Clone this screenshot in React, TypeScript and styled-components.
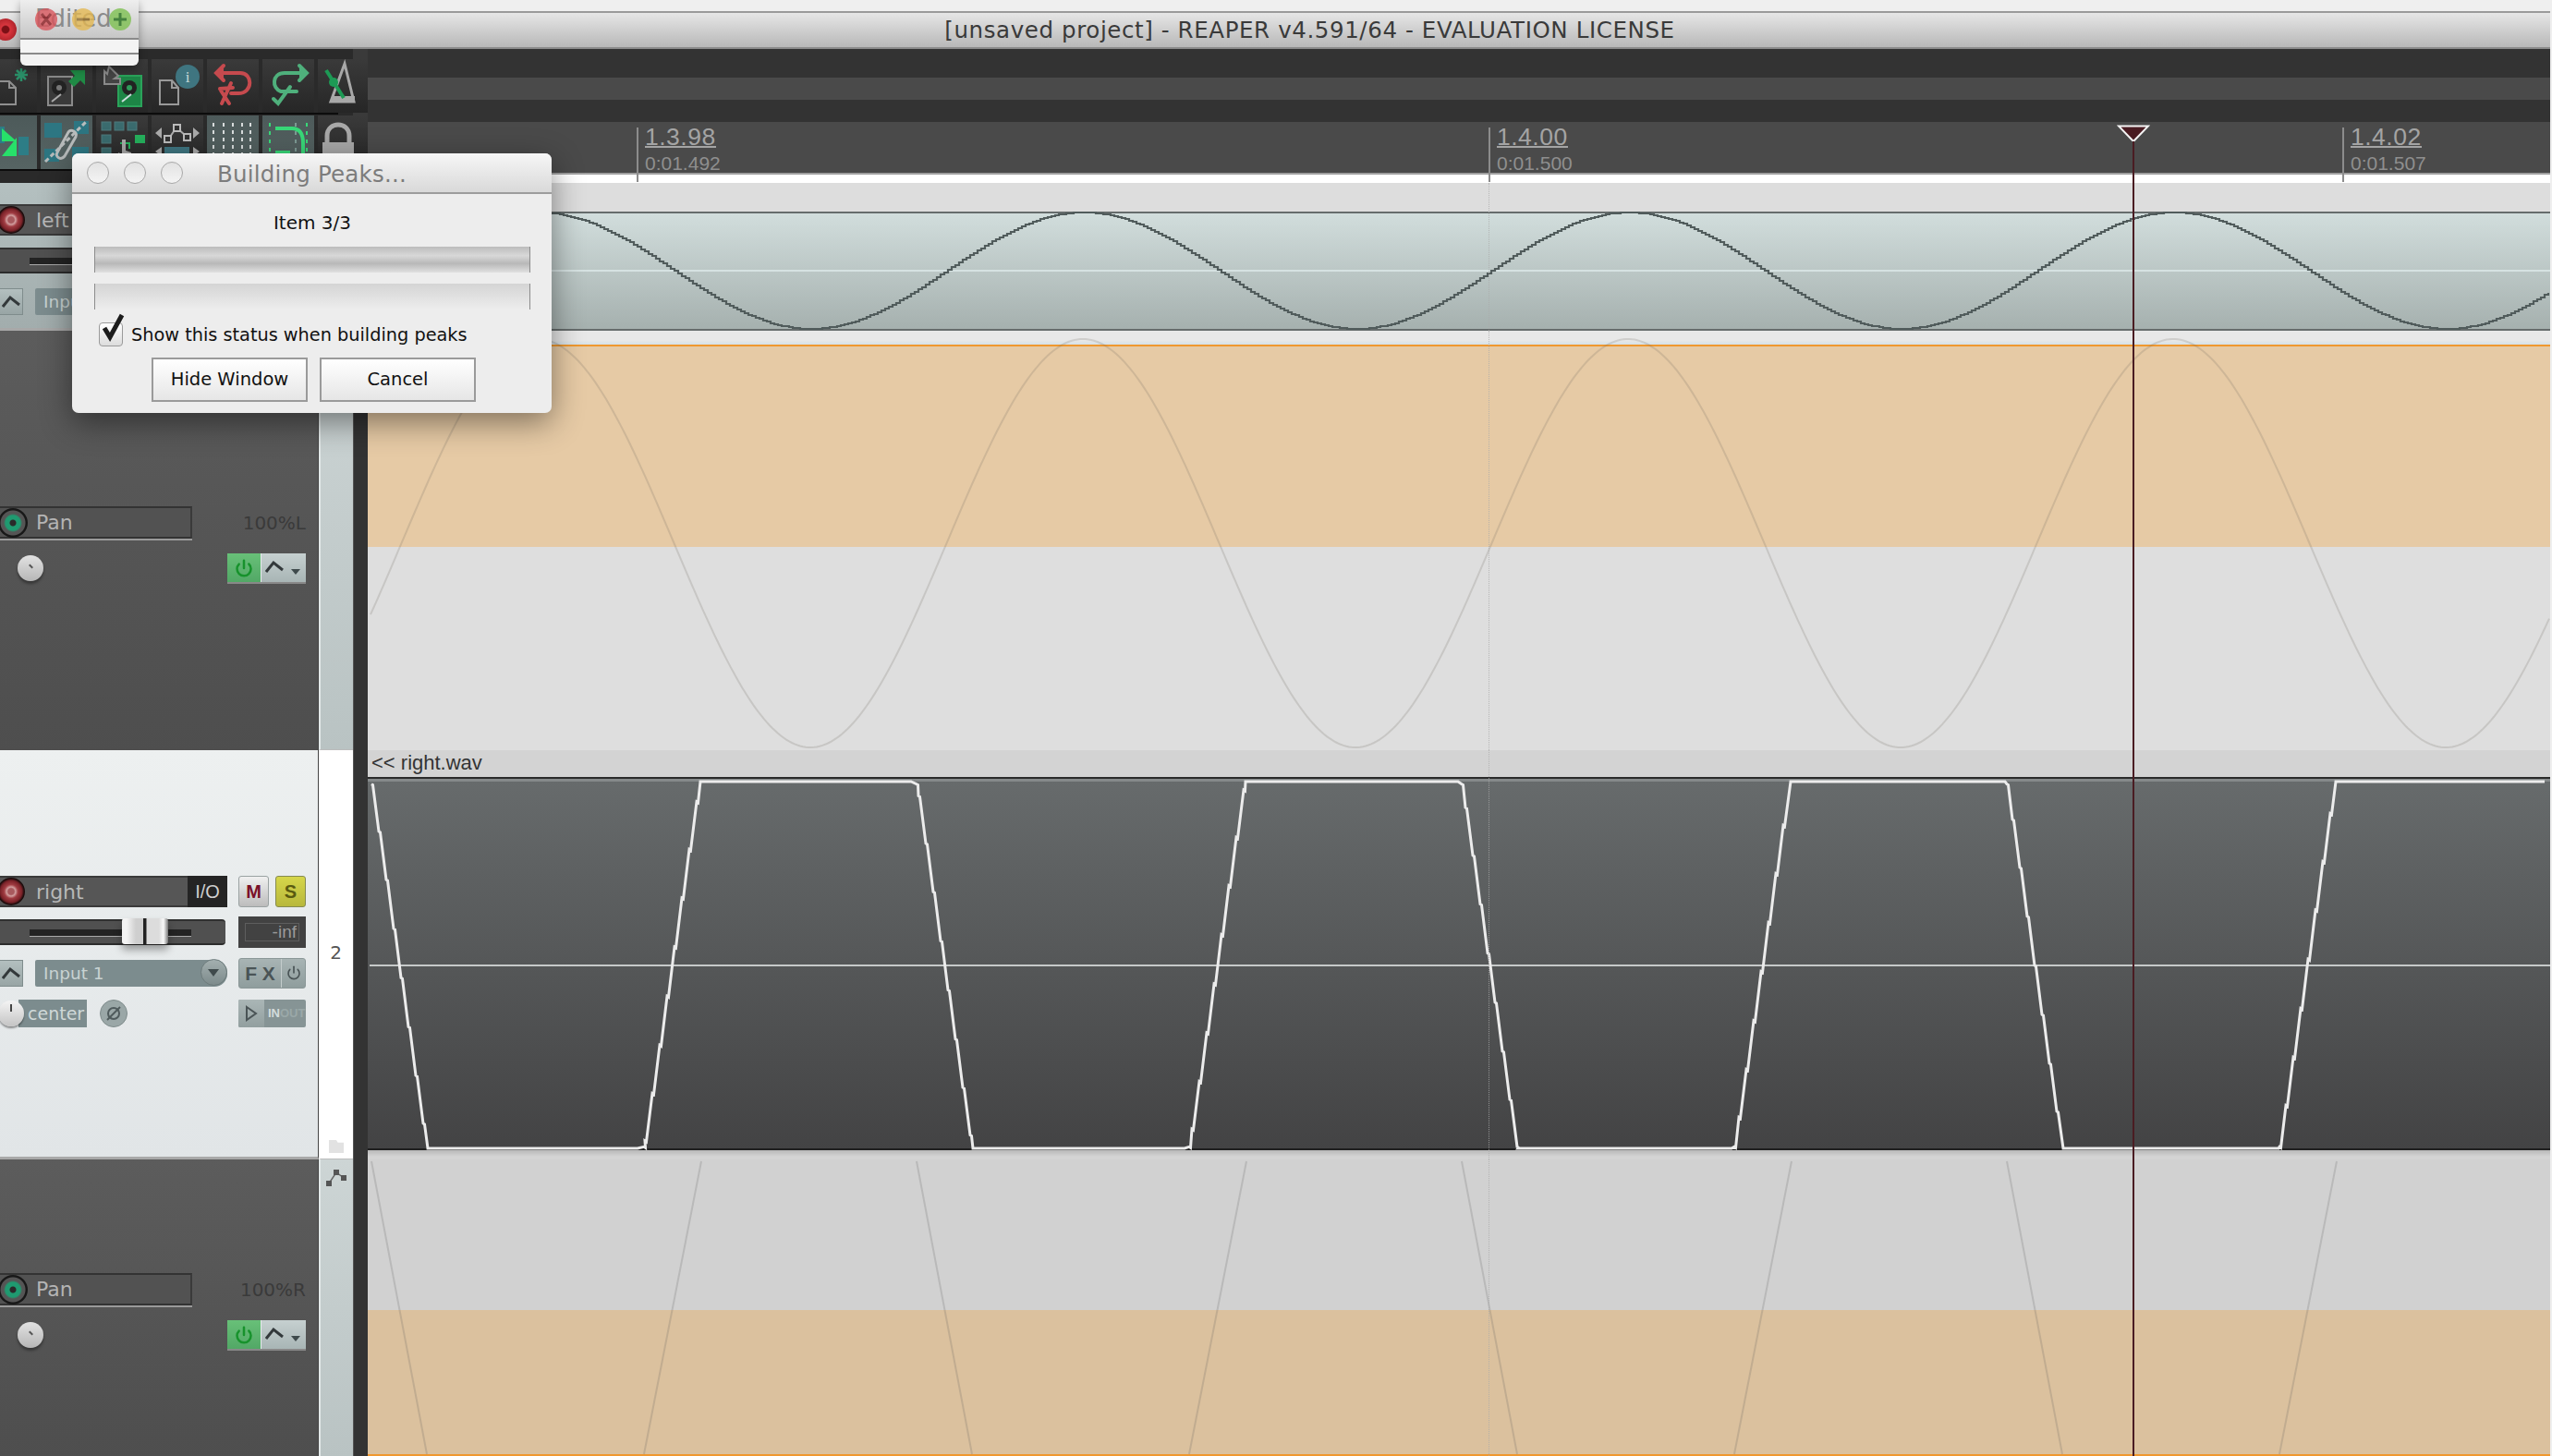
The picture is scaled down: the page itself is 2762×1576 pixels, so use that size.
import React from 'react';
import styled, { createGlobalStyle } from 'styled-components';
import { Power } from 'lucide-react';

const PERIOD = 590;

// smooth sine, page coordinates
const sinePath = (center: number, amp: number, peakAt: number, from = 398, to = 2760) => {
  let d = '';
  for (let x = from; x <= to; x += 3) {
    const y = center - amp * Math.cos((2 * Math.PI * (x - peakAt)) / PERIOD);
    d += `${d ? 'L' : 'M'}${x} ${y.toFixed(1)}`;
  }
  return d;
};

// same sine but stair stepped, the way the peaks are drawn
const stairPath = (center: number, amp: number, peakAt: number) => {
  let d = '';
  for (let x = 398; x <= 2760; x += 4) {
    const y = Math.round(center - amp * Math.cos((2 * Math.PI * (x - peakAt)) / PERIOD));
    d += d ? `H${x}V${y}` : `M${x} ${y}`;
  }
  return d;
};

// clipped sine of the right channel, with the little jogs on the slopes
const clippedPath = () => {
  const TOP = 846;
  const BOTTOM = 1243;
  let d = '';
  let wasClipped = false;
  for (let x = 402; x <= 2760; x += 1) {
    const raw = 1045 - 625 * Math.sin((2 * Math.PI * (x - 727)) / PERIOD);
    const y = Math.max(TOP, Math.min(BOTTOM, raw));
    const clipped = y === TOP || y === BOTTOM;
    // keep the corners sharp, step the slopes every 8px
    if (clipped !== wasClipped || (x - 402) % 8 === 0) {
      d += `${d ? 'L' : 'M'}${x} ${y.toFixed(1)}`;
      if (!clipped) d += `L${x + 1.5} ${(y + 1).toFixed(1)}`;
    }
    wasClipped = clipped;
  }
  return d;
};

const ghostEdges = () => {
  const parts: string[] = [];
  for (let k = 0; k < 4; k++) {
    parts.push(`M${402 + k * PERIOD} 1255L${462 + k * PERIOD} 1572`);
    parts.push(`M${759 + k * PERIOD} 1255L${697 + k * PERIOD} 1572`);
  }
  return parts.join('');
};

const toolbarIcons: React.ReactNode[][] = [
  [
    <g key="new" fill="none" stroke="#8f8f8f" strokeWidth="2" transform="translate(16 0)">
      <path d="M-4 24H10L17 31V49H-4Z" />
      <path d="M10 24V31H17" />
      <path d="M23 10V24M16 17H30M18 12L28 22M28 12L18 22" stroke="#2a8f68" strokeWidth="2.5" />
    </g>,
    <g key="save">
      <rect x="8" y="19" width="26" height="31" fill="#3a3a3a" stroke="#8a8a8a" strokeWidth="2" />
      <circle cx="20" cy="31" r="8" fill="#222" />
      <circle cx="20" cy="31" r="3" fill="#777" />
      <path d="M12 46L22 38" stroke="#aaa" strokeWidth="2" />
      <path d="M30 24L37 18L32 12H48V28L43 23L36 30Z" fill="#1f8a45" />
    </g>,
    <g key="open">
      <rect x="24" y="18" width="25" height="33" fill="#1d8546" stroke="#2aa35a" strokeWidth="2" />
      <circle cx="36" cy="31" r="8" fill="#222" />
      <circle cx="36" cy="31" r="3" fill="#2f9a5a" />
      <path d="M28 46L38 38" stroke="#cdd" strokeWidth="2" />
      <path d="M14 8L24 18L20 21L26 21V27H9V13L12 16Z" fill="#444" stroke="#8a8a8a" strokeWidth="2" />
    </g>,
    <g key="info">
      <circle cx="39" cy="19" r="13" fill="#3f7580" />
      <text x="39" y="25" textAnchor="middle" fontSize="17" fontFamily="Liberation Serif, serif" fill="#c8d8d8">i</text>
      <path d="M9 23H22L29 31V49H9Z M22 23V31H29" fill="none" stroke="#999" strokeWidth="2" />
    </g>,
    <g key="undo" fill="none" stroke="#c64a4e" strokeWidth="4" strokeLinecap="round">
      <path d="M17 15H36C50 15 50 37 34 37H26" />
      <path d="M18 7L10 15L18 23" fill="#c64a4e" />
      <path d="M14 32L28 31M26 26L16 48M15 34L24 48" />
    </g>,
    <g key="redo" fill="none" stroke="#4fb07c" strokeWidth="4" strokeLinecap="round">
      <path d="M46 15H24C10 15 10 32 20 35H37" />
      <path d="M40 7L48 15L40 23" fill="#4fb07c" />
      <path d="M12 43L17 48L30 30" />
    </g>,
    <g key="metronome">
      <path d="M29 5L39 46H14Z" fill="none" stroke="#a8a8a8" strokeWidth="3" />
      <path d="M15 46H40V40H17Z" fill="#a8a8a8" />
      <path d="M9 12L28 42" stroke="#1d9a55" strokeWidth="4" />
      <circle cx="17" cy="25" r="5" fill="#1d9a55" />
    </g>,
  ],
  [
    <g key="snap">
      <rect x="16" y="12" width="5" height="18" fill="#2d7d86" />
      <rect x="36" y="23" width="11" height="20" fill="#2d7d86" />
      <path d="M18 14L34 28H18ZM34 24V44H18Z" fill="#27e06a" />
    </g>,
    <g key="link">
      <rect x="4" y="8" width="19" height="16" fill="#2d7682" />
      <rect x="36" y="6" width="16" height="14" fill="#2d7682" />
      <rect x="4" y="36" width="16" height="14" fill="#2d7682" />
      <rect x="34" y="34" width="18" height="16" fill="#2d7682" />
      <g fill="none" stroke="#b8bcbc" strokeWidth="3">
        <path d="M5 50L50 6" strokeDasharray="5 3" />
        <path d="M18 40L30 18C33 14 40 18 38 23L26 44C22 49 15 45 18 40Z" />
      </g>
    </g>,
    <g key="grid">
      <g fill="#3a6b6e" stroke="#4f7a7c">
        <rect x="6" y="7" width="10" height="9" />
        <rect x="20" y="7" width="10" height="9" />
        <rect x="34" y="7" width="10" height="9" />
        <rect x="6" y="21" width="10" height="9" />
        <rect x="6" y="35" width="10" height="9" />
      </g>
      <rect x="42" y="21" width="11" height="9" fill="#25b05c" />
      <path d="M26 30H36V36" fill="none" stroke="#25b05c" strokeWidth="2" />
      <path d="M28 26H32V38L38 40V50H26L24 40L28 42Z" fill="#a8a8a8" />
    </g>,
    <g key="nodes">
      <path d="M18 26L27 13L37 22" fill="none" stroke="#aaa" strokeWidth="2" />
      <rect x="14" y="22" width="7" height="7" fill="#333" stroke="#bbb" strokeWidth="2" />
      <rect x="24" y="10" width="7" height="7" fill="#333" stroke="#bbb" strokeWidth="2" />
      <rect x="35" y="20" width="7" height="7" fill="#333" stroke="#bbb" strokeWidth="2" />
      <path d="M11 13V25L4 19ZM45 13V25L52 19Z" fill="#aaa" />
      <rect x="14" y="34" width="27" height="8" fill="#3f7580" />
      <path d="M11 34V44L4 39ZM45 34V44L52 39Z" fill="#aaa" />
    </g>,
    <g key="dots" stroke="#d8dcdc" strokeWidth="2" strokeDasharray="4 4">
      <path d="M7 8V44M18 8V44M28 8V44M38 8V44M47 8V44" />
    </g>,
    <g key="loop">
      <path d="M8 8V50M48 8V50" stroke="#38d878" strokeWidth="2" strokeDasharray="4 5" fill="none" />
      <path d="M36 8V50" stroke="#7d9a94" strokeWidth="2" strokeDasharray="4 5" fill="none" />
      <path d="M14 14H32C42 14 44 22 44 30V50M14 40H30" fill="none" stroke="#38d878" strokeWidth="4" />
    </g>,
    <g key="lock">
      <path d="M10 32V22C10 6 34 6 34 22V32" fill="none" stroke="#a8a8a8" strokeWidth="5" />
      <rect x="5" y="29" width="34" height="22" fill="#a8a8a8" />
    </g>,
  ],
];

const App: React.FC = () => (
  <>
    <GlobalStyle />
    <Screen>
      <MenuStrip />
      <TitleBar>
        <MainClose />
        <TitleText>[unsaved project] - REAPER v4.591/64 - EVALUATION LICENSE</TitleText>
      </TitleBar>

      <TopArea>
        <ToolbarWrap>
          {toolbarIcons.map((row, r) => (
            <ToolRow key={r}>
              {row.map((icon, c) => (
                <ToolButton key={c} $on={r === 1 && (c === 0 || c === 1 || c === 4 || c === 5)}>
                  <svg width="56" height="58" viewBox="0 0 56 58">{icon}</svg>
                </ToolButton>
              ))}
            </ToolRow>
          ))}
        </ToolbarWrap>
        <Bands>
          <Band $h={31} $c="#333333" />
          <Band $h={24} $c="#4a4a4a" />
          <Band $h={24} $c="#333333" />
          <Ruler>
            <RulerTick $left={291}>
              <Beat>1.3.98</Beat>
              <Stamp>0:01.492</Stamp>
            </RulerTick>
            <RulerTick $left={1213}>
              <Beat>1.4.00</Beat>
              <Stamp>0:01.500</Stamp>
            </RulerTick>
            <RulerTick $left={2137}>
              <Beat>1.4.02</Beat>
              <Stamp>0:01.507</Stamp>
            </RulerTick>
          </Ruler>
          <RulerFoot />
        </Bands>
      </TopArea>

      <Tracks>
        <TrackRowGrid $h={160}>
          <TrackPanel name="left" number="1" top={23} tone="teal" />
          <Divider />
          <Lane>
            <LaneHeader />
            <ItemTeal>
              <CenterLine $c="#d6e2e2" $top={63} />
              <WaveSvg viewBox="398 229 2362 129" preserveAspectRatio="none">
                <path d={stairPath(293, 63, 1172)} fill="none" stroke="#515c5c" strokeWidth="2.2" />
              </WaveSvg>
            </ItemTeal>
            <GridLine />
          </Lane>
        </TrackRowGrid>

        <TrackRowGrid $h={454}>
          <EnvPanel value="100%L" top={190} />
          <Divider />
          <Lane>
            <EnvGap />
            <OrangeLine $h={2} />
            <Fill $h={217} $c="#e6caa5" />
            <Fill $h={220} $c="#dedede" />
            <WaveSvg viewBox="398 358 2362 454" preserveAspectRatio="none">
              <path d={sinePath(588, 221, 1172, 401)} fill="none" stroke="rgba(110,105,95,.2)" strokeWidth="2" />
            </WaveSvg>
            <GridLine />
          </Lane>
        </TrackRowGrid>

        <TrackRowGrid $h={443}>
          <TrackPanel name="right" number="2" top={136} tone="light" full />
          <Divider />
          <Lane>
            <ItemLabel>&lt;&lt; right.wav</ItemLabel>
            <ItemDark>
              <CenterLine $c="#c6c9c9" $top={201} />
              <WaveSvg viewBox="398 843 2362 402" preserveAspectRatio="none">
                <path d={clippedPath()} fill="none" stroke="#ececec" strokeWidth="3" />
              </WaveSvg>
            </ItemDark>
            <ItemFoot />
            <GridLine />
          </Lane>
        </TrackRowGrid>

        <TrackRowGrid $h={323}>
          <EnvPanel value="100%R" top={123} />
          <Divider />
          <Lane>
            <Fill $h={163} $c="#d1d1d1" />
            <Fill $h={156} $c="#dbc19e" />
            <OrangeLine $h={4} />
            <WaveSvg viewBox="398 1253 2362 323" preserveAspectRatio="none">
              <path d={ghostEdges()} fill="none" stroke="rgba(90,90,90,.2)" strokeWidth="2" />
            </WaveSvg>
            <GridLine />
          </Lane>
        </TrackRowGrid>
      </Tracks>

      <Playhead>
        <svg width="36" height="20" viewBox="0 0 36 20">
          <path d="M2 1.5H34L18 18Z" fill="#4a1c22" stroke="#f4f4f4" strokeWidth="2" />
        </svg>
      </Playhead>

      <Palette>
        <PaletteTitle>
          <PaletteText>Edited</PaletteText>
          <PaletteLights>
            <Light $c="#d9535a">
              <svg width="24" height="24" viewBox="0 0 24 24"><path d="M7 6L17 18M17 6L7 18" stroke="#8c1a1f" strokeWidth="3" /></svg>
            </Light>
            <Light $c="#e4b850">
              <svg width="24" height="24" viewBox="0 0 24 24"><path d="M5 12H19" stroke="#96702a" strokeWidth="3" /></svg>
            </Light>
            <Light $c="#7cc04e">
              <svg width="24" height="24" viewBox="0 0 24 24"><path d="M5 12H19M12 5V19" stroke="#1d6a14" strokeWidth="3" /></svg>
            </Light>
          </PaletteLights>
        </PaletteTitle>
        <PaletteBody />
        <PaletteFoot />
      </Palette>

      <Dialog>
        <DialogTitle>
          <DialogLights>
            <GhostLight />
            <GhostLight />
            <GhostLight />
          </DialogLights>
          <DialogName>Building Peaks...</DialogName>
        </DialogTitle>
        <DialogBody>
          <ItemCount>Item 3/3</ItemCount>
          <ProgressBar />
          <ProgressBarEmpty />
          <CheckLine>
            <CheckBox>
              <svg width="32" height="36" viewBox="0 0 32 36">
                <path d="M6 17L12 27L25 3" fill="none" stroke="#1c1c1c" strokeWidth="5" />
              </svg>
            </CheckBox>
            <CheckLabel>Show this status when building peaks</CheckLabel>
          </CheckLine>
          <ButtonLine>
            <DialogButton>Hide Window</DialogButton>
            <DialogButton>Cancel</DialogButton>
          </ButtonLine>
        </DialogBody>
      </Dialog>
    </Screen>
  </>
);

const EnvGlyph: React.FC = () => (
  <svg width="22" height="16" viewBox="0 0 22 16">
    <path d="M1 14L9 4L19 12" fill="none" stroke="#33393b" strokeWidth="3" />
  </svg>
);

const TrackPanel: React.FC<{ name: string; number: string; top: number; tone: 'teal' | 'light'; full?: boolean }> = ({
  name, number, top, tone, full,
}) => (
  <>
    <PanelBody $tone={tone} $top={top}>
      <PanelLine>
        <NameBox>
          <RecButton />
          <TrackName>{name}</TrackName>
          <IoTag>I/O</IoTag>
        </NameBox>
        <MsPair>
          <MuteButton>M</MuteButton>
          <SoloButton>S</SoloButton>
        </MsPair>
      </PanelLine>
      <PanelLine>
        <FaderBox>
          <FaderSlot />
          <FaderCap />
        </FaderBox>
        <Meter><MeterText>-inf</MeterText></Meter>
      </PanelLine>
      <PanelLine>
        <InputCell>
          <SmallEnv><EnvGlyph /></SmallEnv>
          <InputBox>
            Input 1
            <InputArrow />
          </InputBox>
        </InputCell>
        <FxGroup>
          <FxLabel>F X</FxLabel>
          <FxPower><Power size={16} strokeWidth={2.5} color="#4a5456" /></FxPower>
        </FxGroup>
      </PanelLine>
      {full && (
        <PanelLine>
          <PanCell>
            <PanKnob />
            <PanTag>center</PanTag>
            <PhaseButton>
              <svg width="20" height="20" viewBox="0 0 20 20" fill="none" stroke="#4f5a5c" strokeWidth="2">
                <circle cx="10" cy="10" r="6" />
                <path d="M3 17L17 3" />
              </svg>
            </PhaseButton>
          </PanCell>
          <InOutGroup>
            <InPlay>
              <svg width="14" height="18" viewBox="0 0 14 18"><path d="M2 2L12 9L2 16Z" fill="none" stroke="#4a5456" strokeWidth="2" /></svg>
            </InPlay>
            <InOutText>IN<InOutDim>OUT</InOutDim></InOutText>
          </InOutGroup>
        </PanelLine>
      )}
    </PanelBody>
    <Strip $white>
      <StripNumber>{number}</StripNumber>
      <FolderMark />
    </Strip>
  </>
);

const EnvPanel: React.FC<{ value: string; top: number }> = ({ value, top }) => (
  <>
    <EnvBody $top={top}>
      <EnvLine>
        <PanBox>
          <ArmButton />
          <EnvName>Pan</EnvName>
        </PanBox>
        <EnvValue>{value}</EnvValue>
      </EnvLine>
      <EnvLine>
        <EnvKnob />
        <EnvButtons>
          <GreenPower><Power size={20} strokeWidth={3} color="#17922c" /></GreenPower>
          <EnvMode>
            <EnvGlyph />
            <ModeArrow />
          </EnvMode>
        </EnvButtons>
      </EnvLine>
    </EnvBody>
    <Strip>
      <svg width="24" height="22" viewBox="0 0 24 22">
        <path d="M4 17L12 5L20 11" stroke="#666" strokeWidth="1.5" fill="none" />
        <rect x="1" y="14" width="6" height="6" fill="#555" />
        <rect x="9" y="2" width="6" height="6" fill="#555" />
        <rect x="17" y="8" width="6" height="6" fill="#555" />
      </svg>
    </Strip>
  </>
);

const GlobalStyle = createGlobalStyle`
  html, body { margin: 0; padding: 0; background: #efefef; }
  * { box-sizing: border-box; }
`;

const Screen = styled.div`
  position: relative;
  width: 2762px;
  height: 1576px;
  overflow: hidden;
  background: #efefef;
  font-family: "DejaVu Sans", sans-serif;
`;

const MenuStrip = styled.div`
  height: 12px;
  background: #efefef;
`;

const TitleBar = styled.div`
  position: relative;
  height: 41px;
  padding-left: 75px;
  border-top: 2px solid #9a9a9a;
  border-bottom: 2px solid #8c8c8c;
  background: linear-gradient(#e6e6e6, #b8b8b8);
  display: flex;
  align-items: center;
  justify-content: center;
  width: 2760px;
`;

const MainClose = styled.div`
  position: absolute;
  left: -6px;
  top: 6px;
  width: 24px;
  height: 24px;
  border-radius: 50%;
  background: radial-gradient(circle closest-side, #7c1016 30%, #d8363e 42%, #b5262d 100%);
`;

const TitleText = styled.div`
  font-size: 24.5px;
  letter-spacing: 0.6px;
  color: #3a3a3a;
  white-space: nowrap;
`;

const TopArea = styled.div`
  display: flex;
  width: 2760px;
  height: 145px;
  background: #333;
`;

const ToolbarWrap = styled.div`
  width: 398px;
  height: 145px;
  padding-top: 11px;
  background: linear-gradient(90deg, #2a2a2a 382px, #3a3a3a 382px);
  overflow: hidden;
`;

const ToolRow = styled.div`
  display: flex;
  gap: 4px;
  width: 382px;
  margin-left: -16px;
  height: 58px;
  margin-bottom: 3px;
  box-shadow: 0 2px 0 #0c0c0c;
`;

const ToolButton = styled.div<{ $on: boolean }>`
  flex: 0 0 56px;
  height: 58px;
  background: ${({ $on }) => ($on ? 'linear-gradient(#4d5a5a, #566463)' : 'linear-gradient(#3a3a3a, #262626)')};
  overflow: hidden;
`;

const Bands = styled.div`
  flex: 1;
  display: flex;
  flex-direction: column;
`;

const Band = styled.div<{ $h: number; $c: string }>`
  height: ${({ $h }) => $h}px;
  background: ${({ $c }) => $c};
`;

const Ruler = styled.div`
  position: relative;
  height: 57px;
  background: #4a4a4a;
  border-bottom: 2px solid #a0a0a0;
`;

const RulerFoot = styled.div`
  height: 9px;
  background: #fff;
`;

const RulerTick = styled.div<{ $left: number }>`
  position: absolute;
  left: ${({ $left }) => $left}px;
  top: 6px;
  height: 59px;
  padding-left: 7px;
  border-left: 2px solid #8c8c8c;
  color: #a4a4a4;
  font-family: "Liberation Sans", sans-serif;
`;

const Beat = styled.div`
  width: fit-content;
  font-size: 26.5px;
  line-height: 20px;
  border-bottom: 2px solid #a4a4a4;
  letter-spacing: 0.5px;
`;

const Stamp = styled.div`
  font-size: 21px;
  line-height: 24px;
  margin-top: 5px;
  color: #8f8f8f;
`;

const Tracks = styled.div`
  width: 2760px;
  display: flex;
  flex-direction: column;
`;

const TrackRowGrid = styled.div<{ $h: number }>`
  display: grid;
  grid-template-columns: 345px 37px 16px 1fr;
  height: ${({ $h }) => $h}px;
`;

const Divider = styled.div`
  background: #333;
  border-left: 1px solid #555;
`;

const Lane = styled.div`
  position: relative;
  display: flex;
  flex-direction: column;
  overflow: hidden;
`;

const GridLine = styled.div`
  position: absolute;
  left: 1213px;
  top: 0;
  bottom: 0;
  border-left: 1px dotted rgba(170, 170, 170, 0.75);
`;

const LaneHeader = styled.div`
  height: 31px;
  background: #dddddd;
`;

const WaveSvg = styled.svg`
  position: absolute;
  left: 0;
  top: 0;
  width: 100%;
  height: 100%;
`;

const CenterLine = styled.div<{ $c: string; $top: number }>`
  position: absolute;
  left: 2px;
  right: 0;
  top: ${({ $top }) => $top}px;
  height: 2px;
  background: ${({ $c }) => $c};
`;

const ItemTeal = styled.div`
  position: relative;
  height: 129px;
  background: linear-gradient(#d2dedd, #a5b0ae);
  box-shadow: inset 0 2px 0 #666c6c, inset 0 -2px 0 #666c6c;
`;

const EnvGap = styled.div`
  height: 15px;
  background: linear-gradient(#e8e8e8 70%, #d6e1e6);
`;

const OrangeLine = styled.div<{ $h: number }>`
  height: ${({ $h }) => $h}px;
  background: #f0982f;
`;

const Fill = styled.div<{ $h: number; $c: string }>`
  height: ${({ $h }) => $h}px;
  background: ${({ $c }) => $c};
`;

const ItemLabel = styled.div`
  height: 31px;
  padding: 0 4px;
  background: #d3d3d3;
  border-bottom: 2px solid #2a2a2a;
  color: #333;
  font-family: "Liberation Sans", sans-serif;
  font-size: 22px;
  line-height: 28px;
`;

const ItemDark = styled.div`
  position: relative;
  height: 402px;
  background: linear-gradient(#676b6c, #434344);
  box-shadow: inset 0 3px 0 #85898a, inset 0 -2px 0 #1f1f1f;
`;

const ItemFoot = styled.div`
  flex: 1;
  background: linear-gradient(#b8b8b8, #d4d4d4 70%);
`;

const PanelBody = styled.div<{ $tone: 'teal' | 'light'; $top: number }>`
  padding-top: ${({ $top }) => $top}px;
  background: ${({ $tone }) => ($tone === 'teal' ? 'linear-gradient(#b4c0c0, #a2adad)' : 'linear-gradient(#edf0f0, #e1e5e7)')};
  border-right: 1px solid #444;
  border-bottom: 3px solid #a8a8a8;
  overflow: hidden;
`;

const PanelLine = styled.div`
  display: flex;
  align-items: center;
  justify-content: space-between;
  width: 331px;
  height: 34px;
  margin-bottom: 10px;
`;

const NameBox = styled.div`
  display: flex;
  align-items: center;
  width: 246px;
  height: 34px;
  background: #565656;
  border-top: 2px solid #3a3a3a;
  border-bottom: 2px solid #3a3a3a;
`;

const RecButton = styled.div`
  flex: 0 0 30px;
  height: 30px;
  margin-left: -3px;
  border-radius: 50%;
  background: radial-gradient(circle closest-side, #a85a5e 0 22%, #d2a0a0 32%, #a03c42 50%, #7a2228 78%, #1c0c0c 94%);
`;

const TrackName = styled.div`
  flex: 1;
  padding-left: 12px;
  color: #b8b8b8;
  font-size: 22px;
`;

const IoTag = styled.div`
  flex: 0 0 43px;
  height: 34px;
  margin-top: -2px;
  margin-bottom: -2px;
  background: #242424;
  color: #cfcfcf;
  font-family: "Liberation Sans", sans-serif;
  font-size: 20px;
  line-height: 34px;
  text-align: center;
`;

const MsPair = styled.div`
  display: flex;
  gap: 7px;
`;

const MuteButton = styled.div`
  width: 33px;
  height: 34px;
  border-radius: 3px;
  border: 1px solid #9aa2a2;
  background: linear-gradient(#f0f0f0, #bcbcbc);
  color: #7a1028;
  font-family: "Liberation Sans", sans-serif;
  font-weight: 700;
  font-size: 20px;
  line-height: 32px;
  text-align: center;
`;

const SoloButton = styled(MuteButton)`
  border-color: #858a50;
  background: linear-gradient(#d6d64a, #b8b83c);
  color: #5a5a10;
`;

const FaderBox = styled.div`
  position: relative;
  width: 244px;
  height: 28px;
  border-radius: 0 4px 4px 0;
  background: #505050;
  border-top: 2px solid #303030;
  border-bottom: 2px solid #2c2c2c;
`;

const FaderSlot = styled.div`
  position: absolute;
  left: 32px;
  top: 9px;
  width: 175px;
  height: 7px;
  background: #232323;
  box-shadow: 0 1px 0 #aaa;
`;

const FaderCap = styled.div`
  position: absolute;
  left: 132px;
  top: -3px;
  width: 50px;
  height: 28px;
  border-radius: 3px;
  background: linear-gradient(90deg, #f4f4f4 0 10%, #cfcfcf 30% 45%, #222 47% 52%, #dcdcdc 54% 80%, #f8f8f8 90%, #777);
  box-shadow: 0 6px 8px rgba(0, 0, 0, 0.35);
`;

const Meter = styled.div`
  width: 73px;
  height: 34px;
  padding: 7px;
  background: #424242;
`;

const MeterText = styled.div`
  height: 20px;
  padding-right: 2px;
  border: 1px solid #5e5e5e;
  color: #9a9a9a;
  font-family: "Liberation Sans", sans-serif;
  font-size: 19px;
  line-height: 18px;
  text-align: right;
`;

const InputCell = styled.div`
  display: flex;
  align-items: center;
  gap: 13px;
  width: 246px;
`;

const SmallEnv = styled.div`
  flex: 0 0 25px;
  height: 29px;
  display: flex;
  align-items: center;
  justify-content: flex-end;
  background: linear-gradient(#b3bfbf, #98a5a5);
  border: 1px solid #7f8c8c;
  border-left: 0;
  overflow: hidden;
`;

const InputBox = styled.div`
  position: relative;
  flex: 1;
  height: 29px;
  padding-left: 9px;
  border-radius: 2px 14px 14px 2px;
  background: #7c8c8e;
  color: #c8d2d2;
  font-size: 18.5px;
  line-height: 29px;
`;

const InputArrow = styled.div`
  position: absolute;
  right: 0;
  top: -1px;
  width: 29px;
  height: 29px;
  border-radius: 50%;
  background: linear-gradient(#a3afaf, #7d8b8c);
  border: 1px solid #6c7a7b;

  &::after {
    content: '';
    position: absolute;
    left: 7px;
    top: 10px;
    border-top: 8px solid #3f4a4c;
    border-left: 6px solid transparent;
    border-right: 6px solid transparent;
  }
`;

const FxGroup = styled.div`
  display: flex;
  width: 73px;
  height: 33px;
  border-radius: 3px;
  overflow: hidden;
  border: 1px solid #8a9797;
  background: linear-gradient(#a8b4b4, #8f9d9d);
`;

const FxLabel = styled.div`
  flex: 1;
  color: #4a5456;
  font-family: "Liberation Sans", sans-serif;
  font-weight: 700;
  font-size: 21px;
  line-height: 31px;
  text-align: center;
`;

const FxPower = styled.div`
  flex: 0 0 26px;
  display: flex;
  align-items: center;
  justify-content: center;
  border-left: 1px solid #c4cccc;
`;

const PanCell = styled.div`
  display: flex;
  align-items: center;
  width: 246px;
`;

const PanKnob = styled.div`
  position: relative;
  z-index: 1;
  flex: 0 0 28px;
  height: 28px;
  margin-left: -2px;
  border-radius: 50%;
  background: linear-gradient(#f4f4f4, #c4c4c4);
  box-shadow: 0 2px 2px rgba(0, 0, 0, 0.4);

  &::after {
    content: '';
    position: absolute;
    left: 13px;
    top: 4px;
    width: 2px;
    height: 8px;
    background: #444;
  }
`;

const PanTag = styled.div`
  width: 74px;
  height: 30px;
  margin-left: -6px;
  padding-left: 10px;
  background: #7c8c8e;
  color: #cfd8d8;
  font-size: 19px;
  line-height: 30px;
`;

const PhaseButton = styled.div`
  display: flex;
  align-items: center;
  justify-content: center;
  width: 30px;
  height: 30px;
  margin-left: 14px;
  border-radius: 50%;
  background: #9aa7a7;
  border: 1px solid #7f8c8c;
`;

const InOutGroup = styled.div`
  display: flex;
  width: 73px;
  height: 30px;
  border-radius: 2px;
  overflow: hidden;
  background: #869495;
`;

const InPlay = styled.div`
  flex: 0 0 28px;
  display: flex;
  align-items: center;
  justify-content: center;
  background: linear-gradient(#aab6b6, #929f9f);
`;

const InOutText = styled.div`
  flex: 1;
  padding-left: 4px;
  color: #d4dcdc;
  font-family: "Liberation Sans", sans-serif;
  font-weight: 700;
  font-size: 13px;
  line-height: 30px;
  white-space: nowrap;
`;

const InOutDim = styled.span`
  color: #9aa8a8;
`;

const Strip = styled.div<{ $white?: boolean }>`
  position: relative;
  display: flex;
  justify-content: center;
  align-items: ${({ $white }) => ($white ? 'center' : 'flex-start')};
  padding-top: ${({ $white }) => ($white ? 0 : 9)}px;
  padding-bottom: ${({ $white }) => ($white ? 4 : 0)}px;
  padding-right: 2px;
  background: ${({ $white }) => ($white ? '#fff' : 'linear-gradient(#cdd5d5, #b9c3c3)')};
  border-left: 2px solid ${({ $white }) => ($white ? '#fff' : '#e2e8e8')};
  border-bottom: 1px solid #bbb;
`;

const StripNumber = styled.div`
  color: #555;
  font-size: 20px;
`;

const FolderMark = styled.div`
  position: absolute;
  left: 9px;
  bottom: 6px;
  width: 16px;
  height: 14px;
  background: #e2e2e2;
  clip-path: polygon(0 0, 50% 0, 60% 20%, 100% 20%, 100% 100%, 0 100%);
`;

const EnvBody = styled.div<{ $top: number }>`
  padding-top: ${({ $top }) => $top}px;
  background: linear-gradient(#5c5c5c, #4e4e4e);
  border-right: 1px solid #444;
`;

const EnvLine = styled.div`
  display: flex;
  align-items: center;
  justify-content: space-between;
  width: 331px;
  margin-bottom: 16px;
`;

const PanBox = styled.div`
  display: flex;
  align-items: center;
  width: 208px;
  height: 35px;
  background: #525252;
  border-top: 2px solid #333;
  border-right: 2px solid #3a3a3a;
  border-bottom: 2px solid #333;
  box-shadow: 0 2px 0 #9a9a9a;
`;

const ArmButton = styled.div`
  flex: 0 0 32px;
  height: 32px;
  margin-left: -2px;
  border-radius: 50%;
  background: radial-gradient(circle, #2a2a2a 0 3px, #1f9a70 4px 8px, #555 10px 13px, #181818 14px);
`;

const EnvName = styled.div`
  padding-left: 9px;
  color: #b4b4b4;
  font-size: 22px;
`;

const EnvValue = styled.div`
  color: #3a3a3a;
  font-size: 20px;
`;

const EnvKnob = styled.div`
  position: relative;
  width: 28px;
  height: 28px;
  margin-left: 19px;
  border-radius: 50%;
  background: linear-gradient(#e2e2e2, #b6b6b6);
  box-shadow: 0 3px 3px rgba(0, 0, 0, 0.35);

  &::after {
    content: '';
    position: absolute;
    left: 12px;
    top: 11px;
    width: 5px;
    height: 2px;
    background: #555;
    transform: rotate(45deg);
  }
`;

const EnvButtons = styled.div`
  display: flex;
  height: 31px;
  box-shadow: 0 2px 0 #888;
`;

const GreenPower = styled.div`
  display: flex;
  align-items: center;
  justify-content: center;
  width: 36px;
  background: linear-gradient(#68c078, #52a866);
`;

const EnvMode = styled.div`
  position: relative;
  width: 49px;
  padding: 6px 0 0 4px;
  border-left: 1px solid #e6ecec;
  background: linear-gradient(#c6d0d0, #a8b5b5);
`;

const ModeArrow = styled.div`
  position: absolute;
  right: 6px;
  top: 17px;
  border-top: 6px solid #3f4a4c;
  border-left: 5px solid transparent;
  border-right: 5px solid transparent;
`;

const Playhead = styled.div`
  position: absolute;
  left: 2291px;
  top: 135px;
  bottom: 0;
  width: 36px;

  &::after {
    content: '';
    position: absolute;
    left: 17px;
    top: 18px;
    bottom: 0;
    width: 2px;
    background: #4a1c22;
  }
`;

const Palette = styled.div`
  position: absolute;
  left: 22px;
  top: 0;
  width: 128px;
  height: 71px;
  display: flex;
  flex-direction: column;
  border-radius: 0 0 6px 6px;
  overflow: hidden;
  box-shadow: 0 4px 10px rgba(0, 0, 0, 0.35);
`;

const PaletteTitle = styled.div`
  position: relative;
  height: 43px;
  background: linear-gradient(#eeeeee, #c6c6c6);
  border-bottom: 2px solid #8a8a8a;
`;

const PaletteText = styled.div`
  padding: 5px 0 0 16px;
  color: #8a8a8a;
  font-size: 26px;
`;

const PaletteLights = styled.div`
  position: absolute;
  left: 16px;
  top: 9px;
  display: flex;
  gap: 16px;
`;

const Light = styled.div<{ $c: string }>`
  width: 24px;
  height: 24px;
  border-radius: 50%;
  background: ${({ $c }) => $c};
  opacity: 0.78;
`;

const PaletteBody = styled.div`
  height: 16px;
  background: #f4f4f4;
  border-bottom: 2px solid #8a8a8a;
`;

const PaletteFoot = styled.div`
  flex: 1;
  background: #f2f2f2;
`;

const Dialog = styled.div`
  position: absolute;
  left: 78px;
  top: 166px;
  width: 519px;
  height: 281px;
  border-radius: 7px;
  overflow: hidden;
  background: #ededed;
  box-shadow: 0 10px 34px rgba(0, 0, 0, 0.45);
`;

const DialogTitle = styled.div`
  display: flex;
  align-items: center;
  height: 44px;
  padding-left: 16px;
  background: linear-gradient(#f6f6f6, #d9d9d9);
  border-bottom: 2px solid #9c9c9c;
`;

const DialogLights = styled.div`
  display: flex;
  gap: 16px;
`;

const GhostLight = styled.div`
  width: 24px;
  height: 24px;
  border-radius: 50%;
  border: 1px solid #a8a8a8;
  background: linear-gradient(#e2e2e2, #f4f4f4);
`;

const DialogName = styled.div`
  margin-left: 37px;
  padding-top: 2px;
  color: #7c7c7c;
  font-size: 24.5px;
  letter-spacing: 0.2px;
`;

const DialogBody = styled.div`
  display: flex;
  flex-direction: column;
  padding: 19px 23px 0 24px;
`;

const ItemCount = styled.div`
  height: 38px;
  color: #111;
  font-size: 20px;
  text-align: center;
`;

const ProgressBar = styled.div`
  height: 28px;
  border-left: 1px solid #8c8c8c;
  border-right: 1px solid #8c8c8c;
  background: linear-gradient(#bcbcbc, #d8d8d8 35%, #b8b8b8 65%, #e0e0e0);
`;

const ProgressBarEmpty = styled.div`
  height: 28px;
  margin-top: 12px;
  border-left: 1px solid #8c8c8c;
  border-right: 1px solid #8c8c8c;
  background: linear-gradient(#d4d4d4, #ededed);
`;

const CheckLine = styled.div`
  display: flex;
  align-items: center;
  height: 30px;
  margin-top: 12px;
  padding-left: 5px;
`;

const CheckBox = styled.div`
  position: relative;
  flex: 0 0 26px;
  height: 26px;
  border: 1px solid #9a9a9a;
  border-radius: 4px;
  background: linear-gradient(#fff, #dcdcdc);

  svg {
    position: absolute;
    left: -1px;
    top: -12px;
  }
`;

const CheckLabel = styled.div`
  margin-left: 9px;
  color: #111;
  font-size: 19.3px;
  white-space: nowrap;
`;

const ButtonLine = styled.div`
  display: flex;
  gap: 13px;
  margin-top: 10px;
  padding-left: 62px;
`;

const DialogButton = styled.div`
  width: 169px;
  height: 48px;
  border: 2px solid #9a9a9a;
  background: linear-gradient(#fff, #e6e6e6);
  color: #111;
  font-size: 19.5px;
  line-height: 44px;
  text-align: center;
`;

export default App;
